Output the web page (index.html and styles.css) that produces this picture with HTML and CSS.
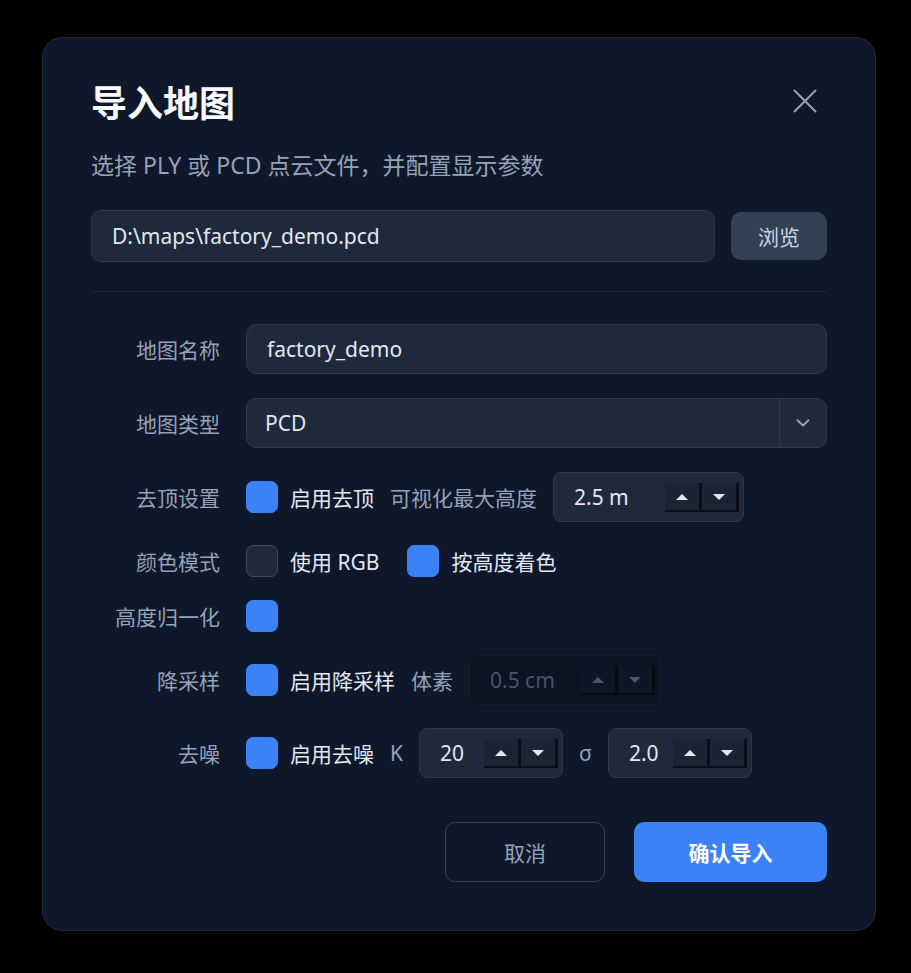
FILE: index.html
```html
<!DOCTYPE html>
<html lang="zh-CN">
<head>
<meta charset="utf-8">
<title>导入地图</title>
<link rel="stylesheet" href="styles.css">
</head>
<body>
<div class="dialog">
  <div class="dialog-header">
    <h1 class="dialog-title">导入地图</h1>
    <button class="close-btn" type="button" aria-label="关闭">
      <svg width="24" height="24" viewBox="0 0 24 24"><path d="M1.5 1.5L22.5 22.5M22.5 1.5L1.5 22.5" stroke="currentColor" stroke-width="2" stroke-linecap="round" fill="none"/></svg>
    </button>
  </div>
  <p class="dialog-desc">选择 PLY 或 PCD 点云文件，并配置显示参数</p>

  <div class="file-row">
    <div class="field file-path">D:\maps\factory_demo.pcd</div>
    <button class="btn-browse" type="button">浏览</button>
  </div>

  <hr class="divider">

  <div class="form">
    <div class="form-label">地图名称</div>
    <div class="field">factory_demo</div>

    <div class="form-label spaced">地图类型</div>
    <div class="select spaced">
      <span class="select-value">PCD</span>
      <span class="select-arrow">
        <svg width="14" height="8" viewBox="0 0 14 8"><path d="M1.5 1.2L7 6.4L12.5 1.2" stroke="currentColor" stroke-width="2" fill="none" stroke-linecap="round" stroke-linejoin="round"/></svg>
      </span>
    </div>

    <div class="form-label spaced">去顶设置</div>
    <div class="controls spaced">
      <span class="check on"></span><span class="check-text">启用去顶</span>
      <span class="inline-label">可视化最大高度</span>
      <div class="spin spin-wide">
        <span class="spin-value">2.5 m</span>
        <span class="spin-btns"><span class="spin-btn up"></span><span class="spin-btn down"></span></span>
      </div>
    </div>

    <div class="form-label">颜色模式</div>
    <div class="controls">
      <span class="check"></span><span class="check-text">使用 RGB</span>
      <span class="check on group-gap"></span><span class="check-text">按高度着色</span>
    </div>

    <div class="form-label">高度归一化</div>
    <div class="controls">
      <span class="check on"></span>
    </div>

    <div class="form-label">降采样</div>
    <div class="controls">
      <span class="check on"></span><span class="check-text">启用降采样</span>
      <span class="inline-label">体素</span>
      <div class="spin spin-wide disabled">
        <span class="spin-value">0.5 cm</span>
        <span class="spin-btns"><span class="spin-btn up"></span><span class="spin-btn down"></span></span>
      </div>
    </div>

    <div class="form-label">去噪</div>
    <div class="controls">
      <span class="check on"></span><span class="check-text">启用去噪</span>
      <span class="inline-label">K</span>
      <div class="spin spin-narrow">
        <span class="spin-value">20</span>
        <span class="spin-btns"><span class="spin-btn up"></span><span class="spin-btn down"></span></span>
      </div>
      <span class="inline-label">σ</span>
      <div class="spin spin-narrow">
        <span class="spin-value">2.0</span>
        <span class="spin-btns"><span class="spin-btn up"></span><span class="spin-btn down"></span></span>
      </div>
    </div>
  </div>

  <div class="actions">
    <button class="btn btn-cancel" type="button">取消</button>
    <button class="btn btn-primary" type="button">确认导入</button>
  </div>
</div>
</body>
</html>
```

FILE: styles.css
```css
* {
  box-sizing: border-box;
}

html,
body {
  margin: 0;
  padding: 0;
  background: #000;
}

body {
  font-family: "Noto Sans", "Noto Sans CJK SC", sans-serif;
  color: #e2e8f0;
  padding: 37px 0 0 42px;
  height: 973px;
  overflow: hidden;
}

button {
  font-family: inherit;
  cursor: pointer;
}

/* dialog shell */
.dialog {
  width: 834px;
  background: #0f172a;
  border: 1px solid #1e293b;
  border-radius: 20px;
  padding: 48px;
  box-shadow: 0 20px 50px rgba(0, 0, 0, 0.5);
}

.dialog-header {
  display: flex;
  align-items: center;
  justify-content: space-between;
  height: 30px;
}

.dialog-title {
  margin: 0;
  font-family: "Noto Sans CJK SC", sans-serif;
  font-size: 36px;
  font-weight: 700;
  line-height: 30px;
  color: #f8fafc;
}

.close-btn {
  width: 44px;
  height: 44px;
  margin: -7px 0;
  padding: 0;
  border: 0;
  background: none;
  color: #94a3b8;
  display: flex;
  align-items: center;
  justify-content: center;
}

.dialog-desc {
  margin: 34px 0 0;
  font-size: 23px;
  line-height: 30px;
  color: #94a3b8;
}

/* file chooser */
.file-row {
  display: flex;
  align-items: center;
  gap: 16px;
  margin-top: 30px;
}

.field {
  flex: 1;
  height: 50px;
  display: flex;
  align-items: center;
  padding: 0 20px;
  background: #1e293b;
  border: 1px solid #2c384c;
  border-radius: 10px;
  font-size: 21px;
  color: #e2e8f0;
  white-space: nowrap;
}

.file-path {
  height: 52px;
}

.btn-browse {
  width: 96px;
  height: 48px;
  padding: 0;
  border: 0;
  border-radius: 10px;
  background: #334155;
  color: #cbd5e1;
  font-size: 21px;
}

.divider {
  margin: 29px 0 32px;
  border: 0;
  border-top: 1px solid #1c2638;
}

/* form grid */
.form {
  display: grid;
  grid-template-columns: 129px 1fr;
  column-gap: 26px;
  row-gap: 23px;
  align-items: center;
}

.form .spaced {
  margin-top: 1px;
}

.form-label {
  text-align: right;
  font-size: 21px;
  color: #94a3b8;
  white-space: nowrap;
}

.select {
  height: 50px;
  display: flex;
  align-items: stretch;
  background: #1e293b;
  border: 1px solid #2c384c;
  border-radius: 10px;
  font-size: 21px;
  color: #e2e8f0;
}

.select-value {
  flex: 1;
  display: flex;
  align-items: center;
  padding: 0 18px;
}

.select-arrow {
  width: 47px;
  border-left: 1px solid #2c384c;
  display: flex;
  align-items: center;
  justify-content: center;
  color: #94a3b8;
}

.controls {
  display: flex;
  align-items: center;
  min-height: 32px;
  font-size: 21px;
  white-space: nowrap;
}

.check {
  width: 32px;
  height: 32px;
  flex: none;
  border-radius: 7px;
  background: #1e293b;
  border: 1.5px solid #3f4a5c;
}

.check.on {
  background: #3b82f6;
  border-color: #3b82f6;
}

.check.group-gap {
  margin-left: 28px;
}

.check-text {
  margin-left: 12px;
  color: #e2e8f0;
}

.inline-label {
  margin: 0 16px;
  color: #94a3b8;
}

/* number spinners */
.spin {
  height: 50px;
  display: flex;
  align-items: center;
  padding: 0 4px 0 20px;
  background: #1e293b;
  border: 1px solid #2c384c;
  border-radius: 8px;
  color: #e2e8f0;
}

.spin-wide {
  width: 191px;
}

.spin-narrow {
  width: 144px;
}

.spin-value {
  flex: 1;
}

.spin-btns {
  display: flex;
}

.spin-btn {
  width: 37px;
  height: 29px;
  display: flex;
  align-items: center;
  justify-content: center;
  background: #1b2434;
  box-shadow: inset -3px -2px 0 #0a0e17;
}

.spin-btn::before {
  content: "";
  width: 0;
  height: 0;
  margin-right: 3px;
  border-left: 6px solid transparent;
  border-right: 6px solid transparent;
}

.spin-btn.up::before {
  border-bottom: 6px solid #e2e8f0;
}

.spin-btn.down::before {
  border-top: 6px solid #e2e8f0;
}

.spin.disabled {
  background: #0c1322;
  border-color: #151d2c;
  color: #475569;
}

.spin.disabled .spin-btn {
  background: #0e1526;
  box-shadow: inset -3px -2px 0 #070a11;
}

.spin.disabled .spin-btn.up::before {
  border-bottom-color: #4b5567;
}

.spin.disabled .spin-btn.down::before {
  border-top-color: #4b5567;
}

/* footer actions */
.actions {
  display: flex;
  justify-content: flex-end;
  gap: 29px;
  margin-top: 44px;
}

.btn {
  height: 60px;
  padding: 0;
  border-radius: 10px;
  font-size: 21px;
}

.btn-cancel {
  width: 160px;
  background: transparent;
  border: 1px solid #334155;
  color: #94a3b8;
}

.btn-primary {
  width: 193px;
  background: #3b82f6;
  border: 0;
  color: #fff;
  font-weight: 700;
}
```
